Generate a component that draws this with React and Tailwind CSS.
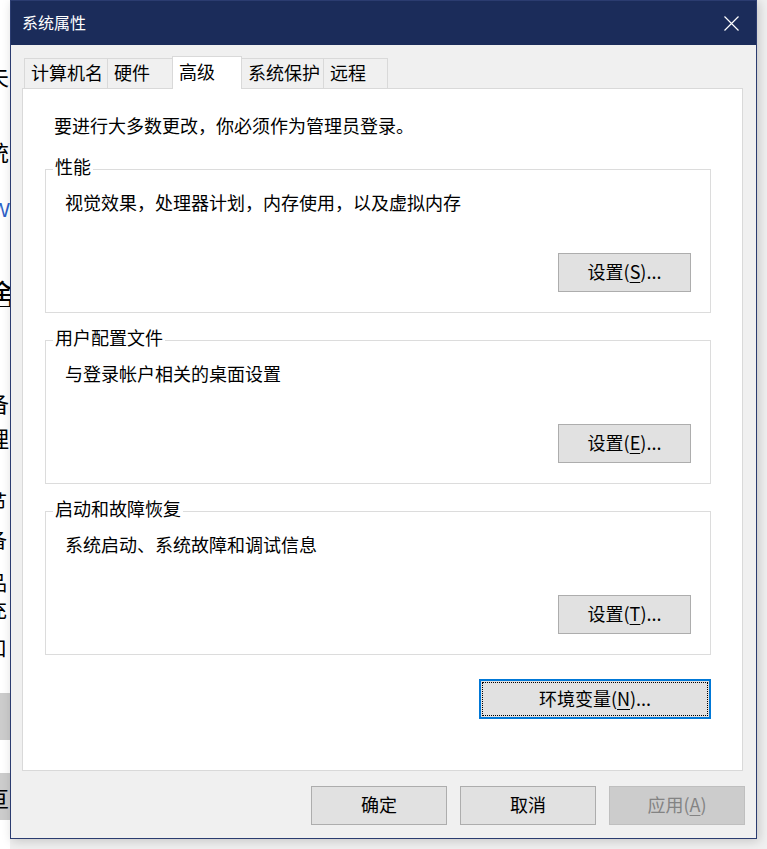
import { useState } from "react";

// the window behind the dialog, clipped to the strip at the left edge
const BehindRow = ({ h, size = "text-[22px]", color = "text-black", children }) => (
  <div className={`${h} flex items-center overflow-hidden`}>
    <span className={`${size} ${color} leading-none whitespace-nowrap ml-[-13px]`}>{children}</span>
  </div>
);

const Btn = ({ children, className = "", disabled }) => (
  <button
    type="button"
    className={`h-[39px] flex items-center justify-center pb-[4px] border text-[18px] leading-[24px] whitespace-nowrap ${
      disabled
        ? "bg-[#cccccc] border-[#bfbfbf] text-[#838383]"
        : "bg-[#e1e1e1] border-[#adadad] text-black"
    } ${className}`}
  >
    {children}
  </button>
);

const Key = ({ k }) => <span className="underline underline-offset-[3px] decoration-1">{k}</span>;

const Group = ({ label, text, keyChar, className = "" }) => (
  <div className={`relative h-[144px] border border-[#dcdcdc] flex flex-col ${className}`}>
    <span className="absolute left-[7px] top-[-16px] px-[2px] bg-white text-[18px] leading-[24px]">
      {label}
    </span>
    <div className="mt-[20px] ml-[19px] h-[24px] text-[18px] leading-[24px]">{text}</div>
    <div className="mt-[39px] flex justify-end pr-[19px]">
      <Btn className="w-[133px]">
        设置(<Key k={keyChar} />)...
      </Btn>
    </div>
  </div>
);

const tabs = [
  { name: "计算机名", w: "w-[84px]" },
  { name: "硬件", w: "w-[66px]" },
  { name: "高级", w: "w-[70px]" },
  { name: "系统保护", w: "w-[83px]" },
  { name: "远程", w: "w-[65px]" },
];

export default function App() {
  const [active] = useState("高级");

  return (
    <div
      className="w-[767px] h-[849px] bg-[#f0f0f0] flex overflow-hidden text-black"
      style={{ fontFamily: '"Noto Sans CJK SC", "Noto Sans", sans-serif' }}
    >
      {/* background window */}
      <div className="w-[10px] h-full bg-white flex flex-col shrink-0">
        <div className="h-[61px]" />
        <BehindRow h="h-[28px]">夫</BehindRow>
        <div className="h-[48px]" />
        <BehindRow h="h-[28px]">统</BehindRow>
        <div className="h-[30px]" />
        <BehindRow h="h-[28px]" size="text-[20px]" color="text-[#2f5fc8]">
          <span className="ml-[4px]" style={{ fontFamily: '"Liberation Sans", sans-serif' }}>W</span>
        </BehindRow>
        <div className="h-[56px]" />
        <BehindRow h="h-[28px]" size="text-[30px]">舍</BehindRow>
        <div className="h-[45px]" />
        <BehindRow h="h-[28px]" size="text-[20px]">?</BehindRow>
        <div className="h-[8px]" />
        <BehindRow h="h-[28px]">备</BehindRow>
        <div className="h-[7px]" />
        <BehindRow h="h-[28px]">理</BehindRow>
        <div className="h-[37px]" />
        <BehindRow h="h-[28px]" size="text-[20px]">节</BehindRow>
        <div className="h-[10px]" />
        <BehindRow h="h-[28px]" size="text-[20px]">备</BehindRow>
        <div className="h-[16px]" />
        <BehindRow h="h-[26px]" size="text-[20px]">品</BehindRow>
        <BehindRow h="h-[28px]" size="text-[20px]">充</BehindRow>
        <div className="h-[10px]" />
        <BehindRow h="h-[28px]" size="text-[20px]">口</BehindRow>
        <div className="h-[31px]" />
        <div className="h-[47px] bg-[#cccccc]" />
        <div className="h-[33px]" />
        <div className="h-[47px] bg-[#cccccc] flex items-center overflow-hidden">
          <span className="text-[22px] leading-none ml-[-13px]">亘</span>
        </div>
      </div>

      {/* dialog */}
      <div className="w-[747px] h-[839px] shrink-0 border border-[#2b3c70] bg-[#f0f0f0] flex flex-col shadow-[2px_2px_10px_rgba(0,0,0,0.18)]">
        {/* title bar */}
        <div className="h-[44px] bg-[#1b2c5a] flex items-center justify-between pl-[11px] pr-[17px]">
          <span className="text-white text-[16px] leading-none pb-[3px]">系统属性</span>
          <svg width="15" height="15" viewBox="0 0 15 15">
            <path d="M0.5 0.5 L14.5 14.5 M14.5 0.5 L0.5 14.5" stroke="#ffffff" strokeWidth="1.2" fill="none" />
          </svg>
        </div>

        <div className="flex-1 flex flex-col px-[11px]">
          {/* tabs */}
          <div className="mt-[11px] h-[32px] flex items-end ml-[2px]">
            {tabs.map((t, i) => {
              const on = t.name === active;
              return (
                <div
                  key={t.name}
                  className={`${t.w} ${i > 0 ? "-ml-px" : ""} ${
                    on ? "h-[33px] bg-white relative z-10 -mb-px pb-[5px]" : "h-[30px] bg-[#f0f0f0] pb-[3px]"
                  } border border-b-0 border-[#d9d9d9] flex items-center pl-[6px] whitespace-nowrap text-[18px] leading-[24px]`}
                >
                  {t.name}
                </div>
              );
            })}
          </div>

          {/* tab panel */}
          <div className="w-[721px] h-[683px] bg-white border border-[#d9d9d9] flex flex-col pl-[22px]">
            <div className="mt-[24px] ml-[9px] h-[24px] text-[18px] leading-[24px]">
              要进行大多数更改，你必须作为管理员登录。
            </div>
            <div className="w-[666px] flex flex-col">
              <Group className="mt-[32px]" label="性能" text="视觉效果，处理器计划，内存使用，以及虚拟内存" keyChar="S" />
              <Group className="mt-[27px]" label="用户配置文件" text="与登录帐户相关的桌面设置" keyChar="E" />
              <Group className="mt-[27px]" label="启动和故障恢复" text="系统启动、系统故障和调试信息" keyChar="T" />
              <div className="mt-[24px] flex justify-end">
                <button
                  type="button"
                  className="w-[232px] h-[40px] border-2 border-[#0078d7] bg-[#e1e1e1] p-[1px]"
                >
                  <div className="h-full border border-dotted border-black flex items-center justify-center pb-[3px] text-[18px] leading-[24px]">
                    环境变量(<Key k="N" />)...
                  </div>
                </button>
              </div>
            </div>
          </div>

          {/* footer buttons */}
          <div className="mt-[15px] flex justify-end gap-[13px]">
            <Btn className="w-[136px]">确定</Btn>
            <Btn className="w-[136px]">取消</Btn>
            <Btn className="w-[136px]" disabled>
              应用(<Key k="A" />)
            </Btn>
          </div>
        </div>
      </div>
    </div>
  );
}
